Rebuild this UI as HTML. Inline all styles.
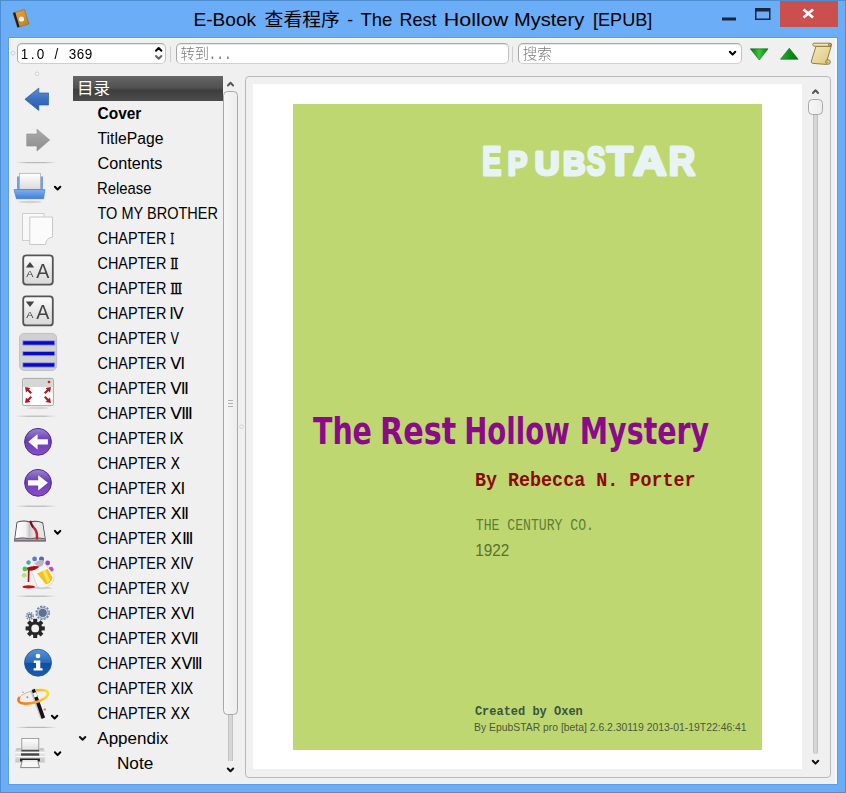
<!DOCTYPE html>
<html><head><meta charset="utf-8">
<title>E-Book Viewer</title>
<style>
*{box-sizing:border-box;margin:0;padding:0}
html,body{width:846px;height:793px;overflow:hidden;background:#6badf6;font-family:"Liberation Sans","Noto Sans CJK SC",sans-serif;}
#win{position:absolute;left:0;top:0;width:846px;height:793px;background:#6badf6;box-shadow:inset 0 0 0 1px #4f8dd2;}
#win>*{position:absolute}
#close{left:780px;top:1px;width:58px;height:26px;background:#c9504d}
#client{left:8.8px;top:37.8px;width:828.6px;height:746.2px;background:#f0f0f0;box-shadow:0 0 0 1px #5f9ae4, inset 1px 1px 0 #f4fbff, inset -2px 0 0 #f4fafa}
.inp{background:#fff;border:1px solid;border-color:#ada8a2 #c2c2c2 #cfcfcf #a6a6a6;border-radius:5px;box-shadow:inset 0 1px 1px #e4e4e4}
#tochead{left:73px;top:76px;width:150px;height:24.7px;background:linear-gradient(#666 0%,#505050 48%,#3e3e3e 56%,#4c4c4c 100%)}
#frame{left:245px;top:76px;width:586px;height:701.5px;border:1px solid #b9b9b9;border-radius:4px;background:#f0f0f0}
#page{left:253px;top:84px;width:549px;height:685.3px;background:#fff}
#cover{left:293px;top:104px;width:469px;height:646px;background:#bed771}
.sbh{background:linear-gradient(90deg,#f6f6f6,#ededed);border:1px solid #a8a8a8;border-radius:4.5px}
.groove{background:#d6d6d6;border-left:1px solid #c2c2c2;border-right:1px solid #c2c2c2}
#ov{left:0;top:0;width:846px;height:793px}
#ov text{white-space:pre}
</style></head><body>
<div id="win">
<div id="close"></div>
<div id="client"></div>
<div class="inp" style="left:17px;top:43px;width:149px;height:21px"></div>
<div class="inp" style="left:176px;top:43px;width:333px;height:21px"></div>
<div class="inp" style="left:518px;top:43px;width:224px;height:21px"></div>
<div id="tochead"></div>
<div class="sbh" style="left:223px;top:91px;width:15px;height:624px"></div>
<div class="groove" style="left:228px;top:715px;width:5px;height:46px"></div>
<div id="frame"></div>
<div id="page"></div>
<div class="sbh" style="left:808px;top:99px;width:15px;height:16px"></div>
<div class="groove" style="left:813px;top:115px;width:5px;height:638.5px;border-radius:0 0 2.5px 2.5px"></div>
<div id="cover"></div>
<svg id="ov" width="846" height="793" viewBox="0 0 846 793">
<defs>
<linearGradient id="gsep" x1="0" x2="1" y1="0" y2="0"><stop offset="0" stop-color="#c0c0c0" stop-opacity="0"/><stop offset=".3" stop-color="#b8b8b8"/><stop offset=".7" stop-color="#b8b8b8"/><stop offset="1" stop-color="#c0c0c0" stop-opacity="0"/></linearGradient>
<linearGradient id="gback" x1="0" x2="0" y1="0" y2="1"><stop offset="0" stop-color="#5c90d8"/><stop offset=".5" stop-color="#3a70c0"/><stop offset="1" stop-color="#2a5aa8"/></linearGradient>
<linearGradient id="gfwd" x1="0" x2="0" y1="0" y2="1"><stop offset="0" stop-color="#ababab"/><stop offset="1" stop-color="#8c8c8c"/></linearGradient>
<linearGradient id="gtray" x1="0" x2="0" y1="0" y2="1"><stop offset="0" stop-color="#7fb0f0"/><stop offset="1" stop-color="#3f7fd8"/></linearGradient>
<linearGradient id="gpaper" x1="0" x2="0" y1="0" y2="1"><stop offset="0" stop-color="#ffffff"/><stop offset="1" stop-color="#dcdcdc"/></linearGradient>
<linearGradient id="gbtn" x1="0" x2="0" y1="0" y2="1"><stop offset="0" stop-color="#fbfbfb"/><stop offset="1" stop-color="#d8d8d8"/></linearGradient>
<linearGradient id="gpurple" x1="0" x2="0" y1="0" y2="1"><stop offset="0" stop-color="#9c84d0"/><stop offset=".45" stop-color="#6a3eb4"/><stop offset="1" stop-color="#8a4cc8"/></linearGradient>
<linearGradient id="ginfo" x1="0" x2="0" y1="0" y2="1"><stop offset="0" stop-color="#5a94d8"/><stop offset=".5" stop-color="#2868b8"/><stop offset=".52" stop-color="#0f4fa0"/><stop offset="1" stop-color="#1a5cb0"/></linearGradient>
<linearGradient id="ggrn" x1="0" x2="1" y1="0" y2="0"><stop offset="0" stop-color="#0a7010"/><stop offset=".5" stop-color="#38c838"/><stop offset="1" stop-color="#0a7a10"/></linearGradient>
<linearGradient id="ggrn2" x1="0" x2="1" y1="0" y2="0"><stop offset="0" stop-color="#2cb030"/><stop offset=".5" stop-color="#109018"/><stop offset="1" stop-color="#067010"/></linearGradient>
<linearGradient id="gscroll" x1="0" x2="1" y1="0" y2="1"><stop offset="0" stop-color="#f2e8b8"/><stop offset="1" stop-color="#dcc880"/></linearGradient>
<linearGradient id="gring" x1="0" x2="1" y1="0" y2="0"><stop offset="0" stop-color="#f07818"/><stop offset=".5" stop-color="#f8a020"/><stop offset="1" stop-color="#fadc28"/></linearGradient>
<linearGradient id="gbook" x1="0" x2="1" y1="0" y2="1"><stop offset="0" stop-color="#e8a848"/><stop offset=".5" stop-color="#d89030"/><stop offset="1" stop-color="#a88820"/></linearGradient>
<linearGradient id="gprn" x1="0" x2="0" y1="0" y2="1"><stop offset="0" stop-color="#b4b4b4"/><stop offset=".3" stop-color="#e8e8e8"/><stop offset="1" stop-color="#c4c4c4"/></linearGradient>
<path id="chev" d="M-2.7 -1.5 L0 1.3 L2.7 -1.5" fill="none" stroke-width="2" stroke-linecap="round" stroke-linejoin="round"/>
</defs>

<!-- title bar -->
<g id="appicon">
<path d="M13 13 L24.5 9.5 L29 24 L17.5 27.5 Z" fill="url(#gbook)" stroke="#8a6a20" stroke-width=".6"/>
<path d="M13 13 L15.2 12.3 L19.6 26.8 L17.5 27.5 Z" fill="#1c1c28"/>
<circle cx="21.5" cy="19" r="2.6" fill="#f4f0f4"/>
</g>
<rect x="722" y="17.5" width="14" height="3" fill="#1a2540"/>
<path d="M755 8 H770.5 V20 H755 Z M756.5 11.5 V18.5 H769 V11.5 Z" fill="#1a2540" fill-rule="evenodd"/>
<path d="M803.5 9.5 L813 17.5 M813 9.5 L803.5 17.5" stroke="#fff" stroke-width="2.6" fill="none"/>

<!-- toolbar handles -->
<circle cx="13.2" cy="53.2" r="1.8" fill="#f6f6f6" stroke="#cdcdcd" stroke-width=".9"/>
<circle cx="37" cy="73.8" r="1.8" fill="#f6f6f6" stroke="#cdcdcd" stroke-width=".9"/>
<circle cx="241.5" cy="426.6" r="1.8" fill="#f6f6f6" stroke="#cdcdcd" stroke-width=".9"/>
<path d="M228 400.5 H233 M228 403.5 H233 M228 406.5 H233" stroke="#b0b0b0" stroke-width="1"/>
<!-- toolbar separators (top) -->
<rect x="170" y="46.5" width="1" height="16" fill="#cecece"/>
<rect x="512" y="46.5" width="1" height="16" fill="#cecece"/>

<!-- spin arrows -->
<use href="#chev" transform="translate(158.7 49.3) scale(1 -1)" stroke="#000"/>
<use href="#chev" transform="translate(158.7 57.5)" stroke="#666"/>
<!-- combobox arrow -->
<use href="#chev" transform="translate(732.6 53.3)" stroke="#000"/>
<!-- green triangles -->
<path d="M750.3 48.8 L768 48.8 L759.3 60 Z" fill="url(#ggrn)" stroke="#0a6a10" stroke-width=".6"/>
<path d="M780.5 59.3 L798.2 59.3 L789.3 48.2 Z" fill="url(#ggrn2)" stroke="#0a6a10" stroke-width=".6"/>
<!-- scroll -->
<g id="scroll" stroke="#857438" stroke-width=".9" stroke-linejoin="round">
<path d="M816 46.2 L831.2 46.2 L826.6 62 Q829 64 826 64.4 L813 63.4 Q810.6 63 811.4 61 Z" fill="url(#gscroll)"/>
<path d="M813.4 43.2 H830 Q832 43.4 831.6 45 Q831 46.4 829.6 46.3 H815.4 Q811.4 46 813.4 43.2 Z" fill="#f0e4ac"/>
<circle cx="829.8" cy="44.7" r="1.3" fill="#cdb868"/>
<circle cx="828" cy="62" r="2.3" fill="#e4d48c"/>
<circle cx="827.4" cy="62.2" r=".8" fill="#a8924c" stroke="none"/>
</g>

<!-- scrollbar arrows -->
<use href="#chev" transform="translate(230.5 84) scale(.95 -1)" stroke="#555" />
<use href="#chev" transform="translate(230.5 770)" stroke="#111"/>
<use href="#chev" transform="translate(815.5 91.5) scale(.95 -1)" stroke="#555"/>
<use href="#chev" transform="translate(815.5 762.3)" stroke="#111"/>
<!-- tree expander -->
<use href="#chev" transform="translate(82.6 738.5)" stroke="#111"/>

<!-- left toolbar separators -->
<rect x="15" y="162" width="42" height="1.2" fill="url(#gsep)"/>
<rect x="15" y="415.6" width="42" height="1.2" fill="url(#gsep)"/>
<rect x="15" y="505.6" width="42" height="1.2" fill="url(#gsep)"/>
<rect x="15" y="595.6" width="42" height="1.2" fill="url(#gsep)"/>
<rect x="15" y="726.8" width="42" height="1.2" fill="url(#gsep)"/>

<!-- back / forward -->
<path d="M24.9 99.3 L38.8 88.1 V93 H48.5 V105 H38.8 V110.5 Z" fill="url(#gback)" stroke="#2c5ca8" stroke-width=".7" stroke-linejoin="round"/>
<path d="M26.7 134 H37 V129.2 L49.7 140 L37 151 V146 H26.7 Z" fill="url(#gfwd)" stroke="#8e8e8e" stroke-width=".6" stroke-linejoin="round"/>

<!-- open (tray) -->
<ellipse cx="30" cy="202" rx="12" ry="1.2" fill="#d8d0c0"/>
<path d="M17 176.5 H43 V190 H17 Z" fill="#6fa0e8"/>
<rect x="19.5" y="173.3" width="21" height="16" fill="url(#gpaper)" stroke="#a8a8a8" stroke-width=".7"/>
<path d="M14 189.6 H45 L43.6 198.7 H16.4 Z" fill="url(#gtray)" stroke="#3a74c8" stroke-width=".6"/>
<use href="#chev" transform="translate(57.6 188.2)" stroke="#000"/>

<!-- copy (disabled) -->
<rect x="22.5" y="213.5" width="21.5" height="27" fill="#f8f8f8" stroke="#cfcfcf" stroke-width="1"/>
<path d="M29.8 217 H52.5 V237 Q46 238 45.5 244.5 H29.8 Z" fill="#fbfbfb" stroke="#c8c8c8" stroke-width="1"/>

<!-- font bigger -->
<rect x="23.2" y="255.4" width="29.6" height="29.2" rx="3" fill="url(#gbtn)" stroke="#555" stroke-width="1.8"/>
<path d="M25.8 267.6 L30 262 L34.2 267.6 Z" fill="#444"/>
<!-- font smaller -->
<rect x="23.2" y="296.4" width="29.6" height="29" rx="3" fill="url(#gbtn)" stroke="#555" stroke-width="1.8"/>
<path d="M25.8 301.4 L34.2 301.4 L30 307 Z" fill="#444"/>

<!-- single-page (checked) -->
<rect x="19.6" y="333.4" width="37" height="37" rx="4.5" fill="#d0d0d0" stroke="#c0c0c0" stroke-width="1"/>
<g fill="#0808c8" stroke="#9aa0f0" stroke-width=".8">
<rect x="22.8" y="340.8" width="32" height="4.3"/>
<rect x="22.8" y="351.4" width="32" height="4.3"/>
<rect x="22.8" y="362.8" width="32" height="4.3"/>
</g>

<!-- fullscreen -->
<ellipse cx="38" cy="408" rx="11" ry="1.2" fill="#d4d4d4"/>
<rect x="22.6" y="378.4" width="30.8" height="27.2" rx="1.5" fill="#fff" stroke="#a6a6a6" stroke-width="1"/>
<path d="M23.2 379 H52.8 V387 H23.2 Z" fill="#d6d6d6"/>
<circle cx="49" cy="382" r="1.3" fill="#d02028"/>
<g fill="#b01820">
<path d="M25 387 L30.5 388 L29 389.5 L32 392.5 L30.5 394 L27.5 391 L26 392.5 Z"/>
<path d="M51 387 L45.5 388 L47 389.5 L44 392.5 L45.5 394 L48.5 391 L50 392.5 Z"/>
<path d="M25 403 L30.5 402 L29 400.5 L32 397.5 L30.5 396 L27.5 399 L26 397.5 Z"/>
<path d="M51 403 L45.5 402 L47 400.5 L44 397.5 L45.5 396 L48.5 399 L50 397.5 Z"/>
</g>

<!-- prev / next page -->
<circle cx="38" cy="441.8" r="13.4" fill="url(#gpurple)" stroke="#4c2c98" stroke-width="1"/>
<path d="M28.3 441.8 L37.6 434 V439.2 H47.9 V444.4 H37.6 V449.6 Z" fill="#fff"/>
<circle cx="38" cy="482.8" r="13.4" fill="url(#gpurple)" stroke="#4c2c98" stroke-width="1"/>
<path d="M47.9 482.8 L38.2 475.2 V480.3 H28 V485.5 H38.2 V490.5 Z" fill="#fff"/>

<!-- bookmarks book -->
<defs><linearGradient id="glp" x1="0" x2="1" y1="0" y2="0"><stop offset="0" stop-color="#fdfdfd"/><stop offset=".7" stop-color="#f2f2f2"/><stop offset="1" stop-color="#c4c4c4"/></linearGradient>
<linearGradient id="grp" x1="0" x2="1" y1="0" y2="0"><stop offset="0" stop-color="#d0d0d0"/><stop offset=".4" stop-color="#ececec"/><stop offset="1" stop-color="#e2e2e2"/></linearGradient></defs>
<path d="M14 541.6 L16.6 522 Q23.5 519.4 29.9 521.6 Q36.5 519.6 43.1 522.6 L46.1 541.6 Z" fill="#4a4048"/>
<path d="M15.2 538.6 L17.4 522.6 Q23.6 520.4 29.9 522.4 L30 538.4 Q22 536.4 15.2 538.6 Z" fill="url(#glp)"/>
<path d="M44.9 538.6 L42.4 523.2 Q36.4 520.8 29.9 522.4 L30 538.4 Q38 536.4 44.9 538.6 Z" fill="url(#grp)"/>
<path d="M14.6 539.4 Q22 537 30 539.2 Q38 537 45.5 539.4 L45.8 540.6 H14.3 Z" fill="#a8a4a8"/>
<path d="M29.4 521 Q30.6 526.6 34 530 Q36 532.4 35.8 539.4 L38.2 539.4 Q38.6 531.6 36 528.6 Q32.6 525 31.2 520.8 Z" fill="#c8202c"/>
<path d="M29.4 521 Q30.4 525.6 32.4 528 L33.4 526.6 Q31.8 524 31.2 520.8 Z" fill="#6a1018"/>
<use href="#chev" transform="translate(57.6 532.4)" stroke="#000"/>

<!-- paint bucket -->
<g id="paint">
<circle cx="34.6" cy="558.9" r="2.4" fill="#5a7ad0"/>
<circle cx="41.5" cy="558.9" r="2.5" fill="#6a5cb8"/>
<circle cx="47.7" cy="563" r="2.4" fill="#9a48c0"/>
<circle cx="51" cy="569.2" r="2.5" fill="#c050b8"/>
<circle cx="28.5" cy="562.5" r="2.2" fill="#48a8a8"/>
<circle cx="24.9" cy="568.9" r="2.4" fill="#48c458"/>
<circle cx="24.3" cy="575.3" r="2.4" fill="#a0e060" opacity=".8"/>
<ellipse cx="42" cy="588" rx="10" ry="1.2" fill="#cfcfcf"/>
<path d="M31.5 571 Q33 563 38.5 561 Q43 559.6 44 563 L54 575 Q55 582 48 586 Q41 589.6 37 586 Z" fill="#f6f6f6" stroke="#c8c8c8" stroke-width=".6"/>
<path d="M34.6 563.4 Q38 559.6 43.4 560.6 Q44.6 563 42 566 Q38 568 34.6 563.4 Z" fill="#b4b8c0"/>
<path d="M37 573.6 L47.6 569 L52.6 577.4 Q52 582 46 584.6 Z" fill="#f0c418"/>
<path d="M42.6 571.2 L45.6 570 L50 580.6 L47.4 583 Z" fill="#f8e060"/>
<path d="M27.2 567.6 Q33 565 39.6 566.4 Q35 570.8 29.6 570.8 L29.3 582 L27.7 582 L27.9 570.4 Q26.6 569.4 27.2 567.6 Z" fill="#b00c14"/>
<ellipse cx="28.7" cy="586.9" rx="6.3" ry="1.6" fill="#c81018"/>
</g>

<!-- gears -->
<g id="gears">
<g transform="translate(35.2 628.4)" fill="#262626">
<circle r="7" /><g id="teeth"><rect x="-2" y="-9.6" width="4" height="19.2"/><rect x="-9.6" y="-2" width="19.2" height="4"/></g><use href="#teeth" transform="rotate(45)"/>
<circle r="3.9" fill="#f2f2f2"/>
</g>
<g transform="translate(42.7 612.9)">
<circle r="6.5" fill="none" stroke="#7088a8" stroke-width="1.6" stroke-dasharray="2.1 1.3"/>
<circle r="5.8" fill="#7f94b2"/>
<circle r="5" fill="#d4dbe6"/>
<circle r="4.2" fill="#5b7290"/>
</g>
<g transform="translate(29.8 616)">
<circle r="3.4" fill="none" stroke="#6a7f9a" stroke-width="1.4" stroke-dasharray="1.3 1.1"/>
<circle r="2.4" fill="#6a7f9a"/><circle r=".9" fill="#dfe4ec"/>
</g>
</g>

<!-- info -->
<circle cx="38" cy="662.7" r="13.5" fill="url(#ginfo)" stroke="#1a50a0" stroke-width=".8"/>
<circle cx="38" cy="656" r="2.3" fill="#fff"/>
<path d="M33.8 660.6 H40.3 V668.2 H42.6 V670.6 H33.6 V668.2 H36 V663 H33.8 Z" fill="#fff"/>

<!-- wand -->
<g id="wand">
<ellipse cx="33.2" cy="696.8" rx="15.2" ry="5.9" transform="rotate(-14 33.2 696.8)" fill="none" stroke="#b09a58" stroke-width=".8" opacity=".7"/>
<path d="M30.4 691.4 L33.6 690.2 L43.2 717.4 L40.4 718.6 Z" fill="#9a9a9a" opacity=".5"/>
<path d="M31.7 689.9 L34.9 688.8 L45.1 717.6 L41.7 718.9 Z" fill="#121212"/>
<path d="M32.9 693.2 L36.1 692.1 L37.6 696.4 L34.4 697.5 Z" fill="#f2f2f2"/>
<ellipse cx="33.2" cy="696.8" rx="15.2" ry="5.9" transform="rotate(-14 33.2 696.8)" fill="none" stroke="url(#gring)" stroke-width="2.6" pathLength="360" stroke-dasharray="195 100 65 0" stroke-linecap="round"/>
<circle cx="27.4" cy="697.2" r="1" fill="#e87838"/><circle cx="44.8" cy="709.4" r="1.2" fill="#e88060"/><circle cx="23" cy="692.2" r=".7" fill="#c070c0"/>
</g>
<use href="#chev" transform="translate(54.6 717.2)" stroke="#000"/>

<!-- printer -->
<g id="printer">
<rect x="21.8" y="738.5" width="17" height="12.6" fill="url(#gpaper)" stroke="#8c8c8c" stroke-width=".8"/>
<path d="M16.6 748.2 H21.4 V751.6 H39.2 V748.2 H43.4 L44.8 751 V762.6 H15.3 V751 Z" fill="url(#gprn)"/>
<rect x="21.4" y="749.8" width="17.8" height="1.8" fill="#4a4a4a"/>
<rect x="15.3" y="751.8" width="29.5" height="1.5" fill="#f8f8f8"/>
<rect x="21" y="753.3" width="18.2" height="2.4" fill="#444"/>
<rect x="15.3" y="756" width="29.5" height="1.2" fill="#fafafa"/>
<path d="M20 758.4 H40 L39.8 761.4 H20.2 Z" fill="#1e1e1e"/>
<path d="M22.2 760.6 H37.8 L39.4 767.6 H20.6 Z" fill="#f6f6f6" stroke="#6a6a6a" stroke-width=".8"/>
<path d="M22.6 760.6 H37.4" stroke="#f6f6f6" stroke-width="1"/>
</g>
<use href="#chev" transform="translate(57.6 753.8)" stroke="#000"/>

<g id="txt">
<text transform="translate(97.50 119.0) scale(0.9684 1)" fill="#000" style="font-family:'Liberation Sans',sans-serif;font-size:16px;font-weight:bold;">Cover</text>
<text transform="translate(97.60 144.0) scale(0.9836 1)" fill="#000" style="font-family:'Liberation Sans',sans-serif;font-size:16px;">TitlePage</text>
<text transform="translate(97.50 169.0) scale(1.0134 1)" fill="#000" style="font-family:'Liberation Sans',sans-serif;font-size:16px;">Contents</text>
<text transform="translate(97.07 194.0) scale(0.9273 1)" fill="#000" style="font-family:'Liberation Sans',sans-serif;font-size:16px;">Release</text>
<text transform="translate(97.50 219.0) scale(0.9087 1)" fill="#000" style="font-family:'Liberation Sans',sans-serif;font-size:16px;">TO MY BROTHER</text>
<text transform="translate(97.50 244.0) scale(0.9025 1)" fill="#000" style="font-family:'Liberation Sans',sans-serif;font-size:16px;">CHAPTER</text>
<text transform="translate(170.20 244.0) scale(0.6667 1)" fill="#000" style="font-family:'DejaVu Serif',serif;font-size:15px;stroke:#000;stroke-width:.35px;">Ⅰ</text>
<text transform="translate(97.50 269.0) scale(0.9025 1)" fill="#000" style="font-family:'Liberation Sans',sans-serif;font-size:16px;">CHAPTER</text>
<text transform="translate(170.20 269.0) scale(0.8000 1)" fill="#000" style="font-family:'DejaVu Serif',serif;font-size:15px;stroke:#000;stroke-width:.35px;">Ⅱ</text>
<text transform="translate(97.50 294.0) scale(0.9025 1)" fill="#000" style="font-family:'Liberation Sans',sans-serif;font-size:16px;">CHAPTER</text>
<text transform="translate(170.20 294.0) scale(0.8286 1)" fill="#000" style="font-family:'DejaVu Serif',serif;font-size:15px;stroke:#000;stroke-width:.35px;">Ⅲ</text>
<text transform="translate(97.50 319.0) scale(0.9025 1)" fill="#000" style="font-family:'Liberation Sans',sans-serif;font-size:16px;">CHAPTER</text>
<text transform="translate(169.15 319.0) scale(1.0462 1)" fill="#000" style="font-family:'DejaVu Sans',sans-serif;font-size:15px;">Ⅳ</text>
<text transform="translate(97.50 344.0) scale(0.9025 1)" fill="#000" style="font-family:'Liberation Sans',sans-serif;font-size:16px;">CHAPTER</text>
<text transform="translate(170.50 344.0) scale(0.8273 1)" fill="#000" style="font-family:'DejaVu Sans',sans-serif;font-size:15px;">Ⅴ</text>
<text transform="translate(97.50 369.0) scale(0.9025 1)" fill="#000" style="font-family:'Liberation Sans',sans-serif;font-size:16px;">CHAPTER</text>
<text transform="translate(170.20 369.0) scale(1.0769 1)" fill="#000" style="font-family:'DejaVu Sans',sans-serif;font-size:15px;">Ⅵ</text>
<text transform="translate(97.50 394.0) scale(0.9025 1)" fill="#000" style="font-family:'Liberation Sans',sans-serif;font-size:16px;">CHAPTER</text>
<text transform="translate(170.20 394.0) scale(1.1125 1)" fill="#000" style="font-family:'DejaVu Sans',sans-serif;font-size:15px;">Ⅶ</text>
<text transform="translate(97.50 419.0) scale(0.9025 1)" fill="#000" style="font-family:'Liberation Sans',sans-serif;font-size:16px;">CHAPTER</text>
<text transform="translate(170.20 419.0) scale(1.1474 1)" fill="#000" style="font-family:'DejaVu Sans',sans-serif;font-size:15px;">Ⅷ</text>
<text transform="translate(97.50 444.0) scale(0.9025 1)" fill="#000" style="font-family:'Liberation Sans',sans-serif;font-size:16px;">CHAPTER</text>
<text transform="translate(169.15 444.0) scale(1.0462 1)" fill="#000" style="font-family:'DejaVu Sans',sans-serif;font-size:15px;">Ⅸ</text>
<text transform="translate(97.50 469.0) scale(0.9025 1)" fill="#000" style="font-family:'Liberation Sans',sans-serif;font-size:16px;">CHAPTER</text>
<text transform="translate(170.50 469.0) scale(0.9300 1)" fill="#000" style="font-family:'DejaVu Sans',sans-serif;font-size:15px;">Ⅹ</text>
<text transform="translate(97.50 494.0) scale(0.9025 1)" fill="#000" style="font-family:'Liberation Sans',sans-serif;font-size:16px;">CHAPTER</text>
<text transform="translate(170.50 494.0) scale(1.0538 1)" fill="#000" style="font-family:'DejaVu Sans',sans-serif;font-size:15px;">Ⅺ</text>
<text transform="translate(97.50 519.0) scale(0.9025 1)" fill="#000" style="font-family:'Liberation Sans',sans-serif;font-size:16px;">CHAPTER</text>
<text transform="translate(170.50 519.0) scale(1.0938 1)" fill="#000" style="font-family:'DejaVu Sans',sans-serif;font-size:15px;">Ⅻ</text>
<text transform="translate(97.50 544.0) scale(0.9025 1)" fill="#000" style="font-family:'Liberation Sans',sans-serif;font-size:16px;">CHAPTER</text>
<text transform="translate(170.50 544.0) scale(1.1154 1)" fill="#000" style="font-family:'DejaVu Sans',sans-serif;font-size:15px;">ⅩⅢ</text>
<text transform="translate(97.50 569.0) scale(0.9025 1)" fill="#000" style="font-family:'Liberation Sans',sans-serif;font-size:16px;">CHAPTER</text>
<text transform="translate(170.50 569.0) scale(0.9392 1)" fill="#000" style="font-family:'DejaVu Sans',sans-serif;font-size:15px;">ⅩⅣ</text>
<text transform="translate(97.50 594.0) scale(0.9025 1)" fill="#000" style="font-family:'Liberation Sans',sans-serif;font-size:16px;">CHAPTER</text>
<text transform="translate(170.50 594.0) scale(0.9071 1)" fill="#000" style="font-family:'DejaVu Sans',sans-serif;font-size:15px;">ⅩⅤ</text>
<text transform="translate(97.50 619.0) scale(0.9025 1)" fill="#000" style="font-family:'Liberation Sans',sans-serif;font-size:16px;">CHAPTER</text>
<text transform="translate(170.50 619.0) scale(1.0096 1)" fill="#000" style="font-family:'DejaVu Sans',sans-serif;font-size:15px;">ⅩⅥ</text>
<text transform="translate(97.50 644.0) scale(0.9025 1)" fill="#000" style="font-family:'Liberation Sans',sans-serif;font-size:16px;">CHAPTER</text>
<text transform="translate(170.50 644.0) scale(1.0390 1)" fill="#000" style="font-family:'DejaVu Sans',sans-serif;font-size:15px;">ⅩⅦ</text>
<text transform="translate(97.50 669.0) scale(0.9025 1)" fill="#000" style="font-family:'Liberation Sans',sans-serif;font-size:16px;">CHAPTER</text>
<text transform="translate(170.50 669.0) scale(1.0691 1)" fill="#000" style="font-family:'DejaVu Sans',sans-serif;font-size:15px;">ⅩⅧ</text>
<text transform="translate(97.50 694.0) scale(0.9025 1)" fill="#000" style="font-family:'Liberation Sans',sans-serif;font-size:16px;">CHAPTER</text>
<text transform="translate(170.50 694.0) scale(0.9516 1)" fill="#000" style="font-family:'DejaVu Sans',sans-serif;font-size:15px;">ⅩⅨ</text>
<text transform="translate(97.50 719.0) scale(0.9025 1)" fill="#000" style="font-family:'Liberation Sans',sans-serif;font-size:16px;">CHAPTER</text>
<text transform="translate(170.50 719.0) scale(0.9519 1)" fill="#000" style="font-family:'DejaVu Sans',sans-serif;font-size:15px;">ⅩⅩ</text>
<text transform="translate(97.30 744.0) scale(1.0642 1)" fill="#000" style="font-family:'Liberation Sans',sans-serif;font-size:16px;">Appendix</text>
<text transform="translate(116.92 769.0) scale(1.0760 1)" fill="#000" style="font-family:'Liberation Sans',sans-serif;font-size:16px;">Note</text>
<text transform="translate(193.47 25.5) scale(1.0328 1)" fill="#000" style="font-family:'Liberation Sans',sans-serif;font-size:18.5px;">E-Book</text>
<text transform="translate(264.60 26.3) scale(1.0046 1)" fill="#000" style="font-family:'Liberation Sans','Noto Sans CJK SC',sans-serif;font-size:18.7px;">查看程序</text>
<text transform="translate(347.20 25.5) scale(0.9500 1)" fill="#000" style="font-family:'Liberation Sans',sans-serif;font-size:18.5px;">-</text>
<text transform="translate(360.40 25.5) scale(1.0003 1)" fill="#000" style="font-family:'Liberation Sans',sans-serif;font-size:18.5px;">The</text>
<text transform="translate(399.52 25.5) scale(0.9756 1)" fill="#000" style="font-family:'Liberation Sans',sans-serif;font-size:18.5px;">Rest</text>
<text transform="translate(443.84 25.5) scale(1.1603 1)" fill="#000" style="font-family:'Liberation Sans',sans-serif;font-size:18.5px;">Hollow</text>
<text transform="translate(514.01 25.5) scale(1.0853 1)" fill="#000" style="font-family:'Liberation Sans',sans-serif;font-size:18.5px;">Mystery</text>
<text transform="translate(593.02 25.5) scale(0.9792 1)" fill="#000" style="font-family:'Liberation Sans',sans-serif;font-size:18.5px;">[EPUB]</text>
<text transform="translate(482.27 174.9) scale(0.7167 1)" fill="#e8f4f4" style="font-family:'Liberation Sans',sans-serif;font-size:40px;font-weight:bold;stroke:#e8f4f4;stroke-width:3px;stroke-linejoin:round;">E</text>
<text transform="translate(507.70 174.9) scale(0.9000 1)" fill="#e8f4f4" style="font-family:'Liberation Sans',sans-serif;font-size:32.5px;font-weight:bold;stroke:#e8f4f4;stroke-width:3px;stroke-linejoin:round;">P</text>
<text transform="translate(534.85 174.9) scale(1.0524 1)" fill="#e8f4f4" style="font-family:'Liberation Sans',sans-serif;font-size:32.5px;font-weight:bold;stroke:#e8f4f4;stroke-width:3px;stroke-linejoin:round;">U</text>
<text transform="translate(562.88 174.9) scale(0.9600 1)" fill="#e8f4f4" style="font-family:'Liberation Sans',sans-serif;font-size:32.5px;font-weight:bold;stroke:#e8f4f4;stroke-width:3px;stroke-linejoin:round;">B</text>
<text transform="translate(586.80 174.9) scale(0.7000 1)" fill="#e8f4f4" style="font-family:'Liberation Sans',sans-serif;font-size:40px;font-weight:bold;stroke:#e8f4f4;stroke-width:3px;stroke-linejoin:round;">S</text>
<text transform="translate(606.80 174.9) scale(1.0625 1)" fill="#e8f4f4" style="font-family:'Liberation Sans',sans-serif;font-size:40px;font-weight:bold;stroke:#e8f4f4;stroke-width:3px;stroke-linejoin:round;">T</text>
<text transform="translate(632.94 174.9) scale(1.1630 1)" fill="#e8f4f4" style="font-family:'Liberation Sans',sans-serif;font-size:40px;font-weight:bold;stroke:#e8f4f4;stroke-width:3px;stroke-linejoin:round;">A</text>
<text transform="translate(668.67 174.9) scale(0.9148 1)" fill="#e8f4f4" style="font-family:'Liberation Sans',sans-serif;font-size:40px;font-weight:bold;stroke:#e8f4f4;stroke-width:3px;stroke-linejoin:round;">R</text>
<text transform="translate(313.00 443.6) scale(0.7483 1)" fill="#8a0a8a" style="font-family:'DejaVu Sans',sans-serif;font-size:38px;font-weight:bold;">The</text>
<text transform="translate(379.91 443.6) scale(0.7955 1)" fill="#8a0a8a" style="font-family:'DejaVu Sans',sans-serif;font-size:38px;font-weight:bold;">Rest</text>
<text transform="translate(464.22 443.6) scale(0.7273 1)" fill="#8a0a8a" style="font-family:'DejaVu Sans',sans-serif;font-size:38px;font-weight:bold;">Hollow</text>
<text transform="translate(579.75 443.6) scale(0.7499 1)" fill="#8a0a8a" style="font-family:'DejaVu Sans',sans-serif;font-size:38px;font-weight:bold;">Mystery</text>
<text transform="translate(474.88 485.5) scale(0.9200 1)" fill="#8b0a0a" style="font-family:'Liberation Mono',monospace;font-size:20px;font-weight:bold;">By Rebecca N. Porter</text>
<text transform="translate(475.80 530.0) scale(0.8218 1)" fill="#5f7d36" style="font-family:'Liberation Mono',monospace;font-size:16px;">THE CENTURY CO.</text>
<text transform="translate(475.24 555.9) scale(0.9569 1)" fill="#5d7030" style="font-family:'Liberation Sans',sans-serif;font-size:16px;">1922</text>
<text transform="translate(474.90 714.5) scale(0.9998 1)" fill="#38553f" style="font-family:'Liberation Mono',monospace;font-size:12px;font-weight:bold;">Created by Oxen</text>
<text transform="translate(474.00 731.3) scale(0.9452 1)" fill="#4a5a3a" style="font-family:'Liberation Sans',sans-serif;font-size:11px;">By EpubSTAR pro [beta] 2.6.2.30119 2013-01-19T22:46:41</text>
<text transform="translate(180.60 59.0) scale(0.9517 1)" fill="#7a7a7a" style="font-family:'Liberation Sans','Noto Sans CJK SC',sans-serif;font-size:15px;font-weight:300;filter:grayscale(1);">转到</text>
<text transform="translate(208.57 59.0) scale(0.8107 1)" fill="#7a7a7a" style="font-family:'Liberation Mono',monospace;font-size:16px;filter:grayscale(1);">...</text>
<text transform="translate(522.80 59.3) scale(0.9724 1)" fill="#7a7a7a" style="font-family:'Liberation Sans','Noto Sans CJK SC',sans-serif;font-size:15px;font-weight:300;filter:grayscale(1);">搜索</text>
<text transform="translate(77.07 93.6) scale(1.0667 1)" fill="#fff" style="font-family:'Liberation Sans','Noto Sans CJK SC',sans-serif;font-size:15.5px;">目录</text>
<text transform="translate(26.20 277.4) scale(1.2667 1)" fill="#444" style="font-family:'Liberation Sans',sans-serif;font-size:8.5px;filter:grayscale(1);">A</text>
<text transform="translate(36.20 277.6) scale(0.9571 1)" fill="#444" style="font-family:'Liberation Sans',sans-serif;font-size:20.5px;filter:grayscale(1);">A</text>
<text transform="translate(26.20 318.3) scale(1.2667 1)" fill="#444" style="font-family:'Liberation Sans',sans-serif;font-size:8.5px;filter:grayscale(1);">A</text>
<text transform="translate(36.20 318.5) scale(0.9571 1)" fill="#444" style="font-family:'Liberation Sans',sans-serif;font-size:20.5px;filter:grayscale(1);">A</text>
<text transform="scale(1 1.09)" y="54.4" x="24.6 32.6 40.5 48.5 56.5 64.5 72.5 80.5 88.5" text-anchor="middle" fill="#000" style="font-family:'Liberation Sans',sans-serif;font-size:13.5px;filter:grayscale(1);">1.0 / 369</text>
</g>
</svg>
</div>
</body></html>
